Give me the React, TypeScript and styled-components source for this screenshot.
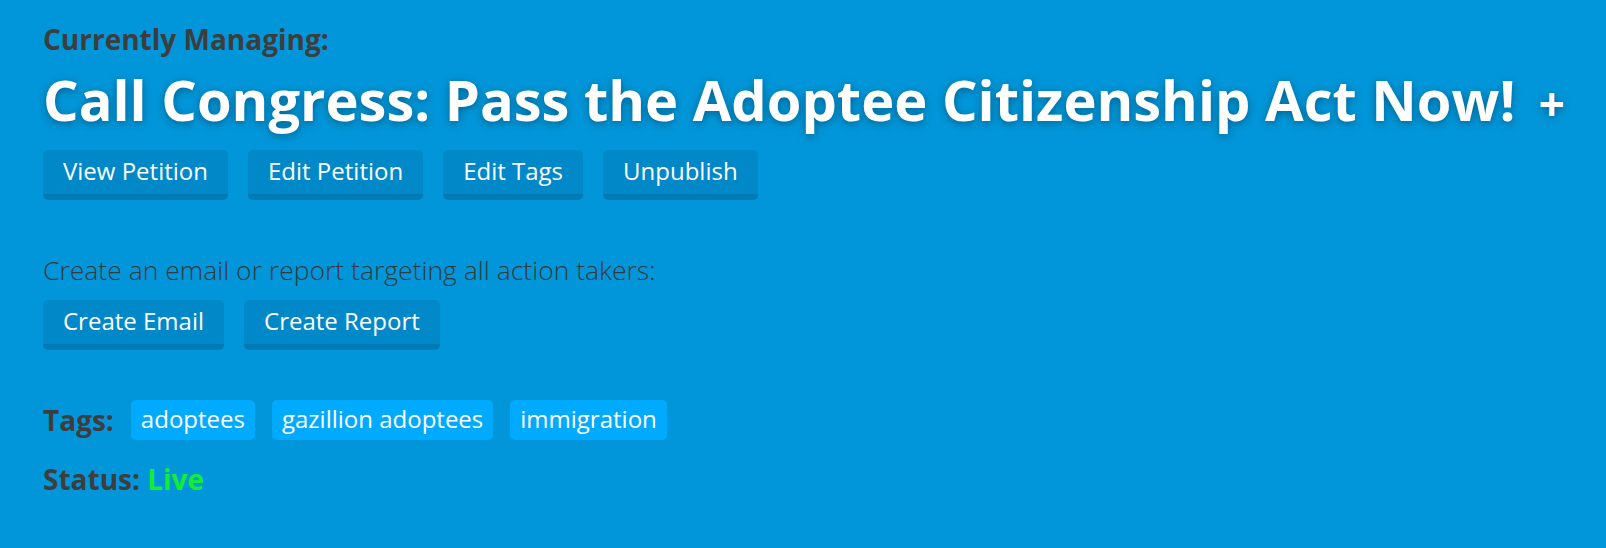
import React from "react";
import styled, { createGlobalStyle } from "styled-components";

const Global = createGlobalStyle`
  html, body {
    margin: 0;
    padding: 0;
    background: #0096d9;
    min-height: 100%;
  }
  body {
    font-family: "Open Sans", "Noto Sans", sans-serif;
  }
`;

const Page = styled.main`
  padding: 23px 43px 40px;
  min-height: 548px;
  box-sizing: border-box;
  background: #0096d9;
`;

const Eyebrow = styled.div`
  font-size: 28px;
  line-height: 32px;
  font-weight: 700;
  color: #3d3d3d;
`;

const Title = styled.h1`
  margin: 12px 0 0;
  font-size: 56px;
  line-height: 64px;
  font-weight: 700;
  color: #ffffff;
  text-shadow: 0 2px 8px rgba(0, 0, 0, 0.35);
  white-space: nowrap;
`;

const Plus = styled.a`
  margin-left: 23px;
  font-size: 46px;
  font-weight: 700;
  color: #ffffff;
  text-decoration: none;
  cursor: pointer;
`;

const ButtonRow = styled.div<{ $top: number }>`
  display: flex;
  gap: 20px;
  margin-top: ${(p) => p.$top}px;
`;

const ActionButton = styled.button`
  font-family: "Open Sans", "Noto Sans", sans-serif;
  font-size: 24px;
  line-height: 42px;
  font-weight: 400;
  color: #ffffff;
  background: #0088c8;
  border: none;
  border-bottom: 6px solid #007ab5;
  border-radius: 5px;
  padding: 0 20px 2px;
  cursor: pointer;
`;

const Hint = styled.p`
  margin: 52px 0 0;
  font-size: 26.5px;
  line-height: 36px;
  font-weight: 300;
  color: #333a40;
`;

const TagRow = styled.div`
  display: flex;
  align-items: center;
  gap: 17px;
  margin-top: 50px;
`;

const Label = styled.span`
  font-size: 28px;
  line-height: 40px;
  font-weight: 700;
  color: #3d3d3d;
`;

const Tag = styled.span`
  font-size: 24px;
  line-height: 37px;
  padding: 0 10px 3px;
  color: #ffffff;
  background: #00aaff;
  border-radius: 5px;
`;

const StatusLine = styled.div`
  margin-top: 21px;
  font-size: 28px;
  line-height: 36px;
  font-weight: 700;
  color: #3d3d3d;
`;

const Live = styled.span`
  color: #11ee33;
`;

export default function App() {
  return (
    <>
      <Global />
      <Page>
        <Eyebrow>Currently Managing:</Eyebrow>
        <Title>
          Call Congress: Pass the Adoptee Citizenship Act Now!
          <Plus>+</Plus>
        </Title>
        <ButtonRow $top={15}>
          <ActionButton>View Petition</ActionButton>
          <ActionButton>Edit Petition</ActionButton>
          <ActionButton>Edit Tags</ActionButton>
          <ActionButton>Unpublish</ActionButton>
        </ButtonRow>
        <Hint>Create an email or report targeting all action takers:</Hint>
        <ButtonRow $top={12}>
          <ActionButton>Create Email</ActionButton>
          <ActionButton>Create Report</ActionButton>
        </ButtonRow>
        <TagRow>
          <Label>Tags:</Label>
          <Tag>adoptees</Tag>
          <Tag>gazillion adoptees</Tag>
          <Tag>immigration</Tag>
        </TagRow>
        <StatusLine>
          Status: <Live>Live</Live>
        </StatusLine>
      </Page>
    </>
  );
}
